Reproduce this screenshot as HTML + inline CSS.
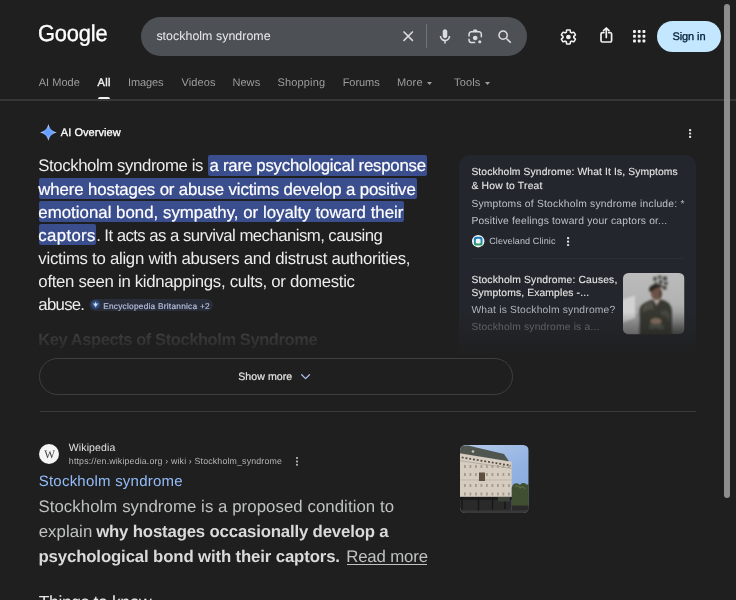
<!DOCTYPE html>
<html lang="en"><head><meta charset="utf-8"><title>stockholm syndrome - Google Search</title>
<style>
html,body{margin:0;padding:0;background:#1f1f1f;}
body{width:736px;height:600px;overflow:hidden;font-family:"Liberation Sans",Arial,sans-serif;}
#page{position:relative;width:736px;height:600px;overflow:hidden;background:#1f1f1f;}
.t{position:absolute;white-space:pre;line-height:1;}
.a{position:absolute;}
.hl{background:#3a4d8c;}
svg{position:absolute;overflow:visible;}

</style></head>
<body>
<div id="page">
<!-- search bar -->
<div class="a" style="left:141px;top:17px;width:386px;height:39px;border-radius:20px;background:#4d5156;"></div>
<!-- clear X -->
<svg style="left:402.7px;top:31.1px" width="10.4" height="10.4" viewBox="0 0 10.4 10.4"><path d="M0.5 0.5L9.9 9.9M9.9 0.5L0.5 9.9" stroke="#dadce0" stroke-width="1.5" fill="none"/></svg>
<div class="a" style="left:425.7px;top:24px;width:1px;height:24px;background:#6f7378;"></div>
<!-- mic -->
<svg style="left:435.8px;top:27.1px" width="18" height="18" viewBox="0 0 24 24" fill="#dadce0"><path d="M12 15c1.66 0 3-1.31 3-2.97V5.97C15 4.31 13.66 3 12 3S9 4.31 9 5.97v6.06C9 13.69 10.34 15 12 15z"/><path d="M11 18.08h2V22h-2z"/><path d="M7.05 16.87c-1.27-1.33-2.05-2.83-2.05-4.87h2c0 1.45.56 2.42 1.47 3.38v.32l-1.15 1.18z"/><path d="M12 16.93a4.97 5.25 0 0 1-3.54-1.55l-1.41 1.49c1.26 1.34 3.02 2.13 4.95 2.13 3.87 0 6.99-2.92 6.99-7h-1.99c0 2.92-2.24 4.93-5 4.93z"/></svg>
<!-- lens -->
<svg style="left:465.5px;top:27.9px" width="18.4" height="18.4" viewBox="0 -960 960 960" fill="#dadce0"><path d="M480-320q-50 0-85-35t-35-85q0-50 35-85t85-35q50 0 85 35t35 85q0 50-35 85t-85 35Zm240 160q-33 0-56.500-23.500T640-240q0-33 23.500-56.500T720-320q33 0 56.500 23.500T800-240q0 33-23.500 56.500T720-160Zm-440 0q-66 0-113-47t-47-113v-80h80v80q0 33 23.500 56.500T280-240h200v80H280Zm480-320v-160q0-33-23.500-56.500T680-720H280q-33 0-56.500 23.500T200-640v120h-80v-120q0-66 47-113t113-47h80l40-80h160l40 80h80q66 0 113 47t47 113v160h-80Z"/></svg>
<!-- search -->
<svg style="left:495.5px;top:27.6px" width="18" height="18" viewBox="0 0 24 24" fill="#dadce0"><path d="M15.500 14h-.79l-.28-.27A6.471 6.471 0 0 0 16 9.500 6.500 6.500 0 1 0 9.500 16c1.610 0 3.090-.590 4.230-1.570l.27.28v.79l5 4.990L20.490 19l-4.990-5zm-6 0C7.010 14 5 11.990 5 9.500S7.010 5 9.500 5 14 7.010 14 9.500 11.990 14 9.500 14z"/></svg>
<!-- gear -->
<svg style="left:559.2px;top:27.8px" width="18.8" height="18" viewBox="0 0 24 24" preserveAspectRatio="none" fill="#f1f1f1"><path d="M13.850 22.250h-3.700c-.740 0-1.360-.540-1.450-1.270l-.270-1.890c-.270-.140-.530-.290-.790-.460l-1.800.720c-.700.260-1.470-.030-1.810-.650L2.200 15.530c-.350-.660-.200-1.440.360-1.880l1.530-1.190c-.010-.150-.020-.300-.020-.460 0-.150.010-.310.020-.460l-1.520-1.190c-.590-.450-.740-1.260-.370-1.880l1.850-3.190c.340-.620 1.110-.900 1.790-.630l1.810.730c.260-.170.520-.320.780-.460l.270-1.910c.090-.700.710-1.250 1.440-1.250h3.700c.740 0 1.360.540 1.450 1.270l.270 1.890c.270.140.530.290.790.460l1.800-.720c.710-.260 1.480.030 1.820.650l1.840 3.180c.360.660.200 1.440-.360 1.880l-1.520 1.190c.1.150.2.300.2.460s-.1.310-.2.460l1.520 1.190c.560.450.720 1.230.370 1.860l-1.860 3.220c-.340.620-1.110.900-1.800.630l-1.800-.720c-.260.170-.520.320-.780.460l-.270 1.910c-.100.680-.720 1.220-1.460 1.220zm-3.230-2h2.760l.370-2.550.530-.220c.440-.180.880-.440 1.340-.780l.450-.340 2.380.960 1.380-2.400-2.030-1.580.070-.560c.030-.260.060-.510.060-.780s-.030-.530-.060-.780l-.070-.560 2.030-1.580-1.390-2.400-2.390.960-.450-.350c-.420-.320-.870-.580-1.330-.770l-.520-.220-.370-2.550h-2.760l-.370 2.550-.530.210c-.440.190-.880.440-1.340.790l-.450.330-2.380-.950-1.390 2.390 2.030 1.580-.070.560a7 7 0 0 0-.060.790c0 .260.020.530.060.780l.070.560-2.030 1.580 1.380 2.400 2.390-.960.450.350c.430.330.860.580 1.330.770l.530.220.38 2.550z"/><circle cx="12" cy="12" r="3"/></svg>
<!-- share -->
<svg style="left:600px;top:27px" width="12.6" height="16" viewBox="0 0 12.6 16" fill="none" stroke="#f1f1f1" stroke-width="1.7" stroke-linejoin="round" stroke-linecap="round"><path d="M3.9 5.600H2.400A1.400 1.400 0 0 0 1 7V13.600A1.400 1.400 0 0 0 2.400 15H10.200A1.400 1.400 0 0 0 11.600 13.600V7A1.400 1.400 0 0 0 10.200 5.600H8.700"/><path d="M6.300 10.400V1.300M3.600 3.700L6.300 1L9 3.700"/></svg>
<!-- apps -->
<svg style="left:632.9px;top:30.1px" width="12.4" height="12.4" viewBox="0 0 12.4 12.4" fill="#f1f1f1"><rect x="0.00" y="0.00" width="2.9" height="2.9" rx="0.9"/><rect x="4.75" y="0.00" width="2.9" height="2.9" rx="0.9"/><rect x="9.50" y="0.00" width="2.9" height="2.9" rx="0.9"/><rect x="0.00" y="4.75" width="2.9" height="2.9" rx="0.9"/><rect x="4.75" y="4.75" width="2.9" height="2.9" rx="0.9"/><rect x="9.50" y="4.75" width="2.9" height="2.9" rx="0.9"/><rect x="0.00" y="9.50" width="2.9" height="2.9" rx="0.9"/><rect x="4.75" y="9.50" width="2.9" height="2.9" rx="0.9"/><rect x="9.50" y="9.50" width="2.9" height="2.9" rx="0.9"/></svg>
<!-- sign in -->
<div class="a" style="left:657px;top:21px;width:64px;height:30.500px;border-radius:16px;background:#c2e7ff;"></div>
<!-- tabs underline + divider -->
<div class="a" style="left:98px;top:96.500px;width:12px;height:2.500px;border-radius:2px 2px 0 0;background:#f1f1f1;"></div>
<div class="a" style="left:0;top:99.300px;width:736px;height:1.300px;background:#363636;"></div>
<svg style="left:427.300px;top:82.300px" width="5" height="3" viewBox="0 0 5 3"><path d="M0 0H5L2.500 3Z" fill="#9e9e9e"/></svg>
<svg style="left:485px;top:82.300px" width="5" height="3" viewBox="0 0 5 3"><path d="M0 0H5L2.500 3Z" fill="#9e9e9e"/></svg>
<!-- AI star -->
<svg style="left:39.700px;top:124.400px" width="16.800" height="16.800" viewBox="0 0 16 16"><defs><radialGradient id="sg" cx="50%" cy="50%" r="50%"><stop offset="0" stop-color="#5f9bff"/><stop offset="0.500" stop-color="#72a7ff"/><stop offset="1" stop-color="#dbe8ff"/></radialGradient></defs><path d="M8 0C8.900 4.300 11.700 7.100 16 8C11.700 8.900 8.900 11.700 8 16C7.100 11.700 4.300 8.900 0 8C4.300 7.100 7.100 4.300 8 0Z" fill="url(#sg)"/></svg>
<!-- AI three dots -->
<svg style="left:689.00px;top:128.90px" width="2.20" height="9.00" viewBox="0 0 2.20 9.00" fill="#e2e2e2"><rect x="0" y="0.00" width="2.20" height="2.20" rx="0.77"/><rect x="0" y="3.40" width="2.20" height="2.20" rx="0.77"/><rect x="0" y="6.80" width="2.20" height="2.20" rx="0.77"/></svg>
<!-- highlights -->
<div class="a hl" style="left:207.8px;top:154.5px;width:219.0px;height:21.700px;border-radius:2px;"></div>
<div class="a hl" style="left:38.8px;top:177.6px;width:377.9px;height:21.700px;border-radius:2px;"></div>
<div class="a hl" style="left:38.8px;top:200.7px;width:365.6px;height:21.700px;border-radius:2px;"></div>
<div class="a hl" style="left:38.8px;top:223.8px;width:57.4px;height:21.700px;border-radius:2px;"></div>
<!-- chip -->
<div class="a" style="left:89px;top:298.800px;width:123.500px;height:12.400px;border-radius:6.200px;background:#292c39;"></div>
<svg style="left:90.900px;top:300.400px" width="9.200" height="9.200" viewBox="0 0 20 20"><circle cx="10" cy="10" r="10" fill="#2b4b7c"/><path d="M10 3.500L12.200 8.200L16.500 7L13.600 11L10 16.500L6.400 11L3.500 7L7.800 8.200Z" fill="#b9cdea"/><circle cx="10" cy="9.500" r="2" fill="#e4eefb"/></svg>
<!-- show more -->
<div class="a" style="left:39px;top:358.200px;width:471.600px;height:35.200px;border:1.200px solid #3f3f3f;border-radius:19px;"></div>
<svg style="left:301.400px;top:374.300px" width="9.200" height="5.400" viewBox="0 0 9.200 5.400" fill="none" stroke="#a9bfe6" stroke-width="1.300" stroke-linecap="round" stroke-linejoin="round"><path d="M0.700 0.700L4.600 4.600L8.500 0.700"/></svg>
<div class="a" style="left:39.500px;top:411px;width:656.500px;height:1px;background:#3a3a3a;"></div>
<!-- right card -->
<div class="a" id="card" style="left:459px;top:154.500px;width:237px;height:200px;border-radius:11px 11px 0 0;background:#23262c;"></div>
<div class="a" style="left:472px;top:258.400px;width:211px;height:1px;background:#2c2f36;"></div>
<!-- cleveland icon -->
<svg style="left:471.500px;top:234.800px" width="12.400" height="12.400" viewBox="0 0 24 24"><defs><linearGradient id="ccg" x1="0" y1="0" x2="0" y2="1"><stop offset="0" stop-color="#1777bd"/><stop offset="0.500" stop-color="#1f86b5"/><stop offset="1" stop-color="#2fa24f"/></linearGradient></defs><circle cx="12" cy="12" r="12" fill="#f4f6f8"/><rect x="3.600" y="3.600" width="16.800" height="16.800" rx="5" fill="url(#ccg)"/><rect x="7.400" y="7.400" width="9.200" height="9.200" rx="2.600" fill="#f1f6f4"/></svg>
<svg style="left:567.00px;top:236.85px" width="2.20" height="9.10" viewBox="0 0 2.20 9.10" fill="#dcdee2"><rect x="0" y="0.00" width="2.20" height="2.20" rx="0.77"/><rect x="0" y="3.45" width="2.20" height="2.20" rx="0.77"/><rect x="0" y="6.90" width="2.20" height="2.20" rx="0.77"/></svg>
<!-- man thumb -->
<svg style="left:622.700px;top:273px" width="61.500" height="61.200" viewBox="0 0 61.500 61.200"><defs><clipPath id="mc"><rect width="61.500" height="61.200" rx="5.500"/></clipPath><linearGradient id="mbg" x1="0" y1="0" x2="0" y2="1"><stop offset="0" stop-color="#bcbcbc"/><stop offset="0.500" stop-color="#b2b2b2"/><stop offset="0.800" stop-color="#8f8f8f"/><stop offset="1" stop-color="#5c5c5c"/></linearGradient><filter id="bl" x="-10%" y="-10%" width="120%" height="120%"><feGaussianBlur stdDeviation="0.850"/></filter></defs><g clip-path="url(#mc)"><rect width="61.500" height="61.200" fill="url(#mbg)"/><g filter="url(#bl)"><path d="M-2 27L12 22.500L12.500 45L-2 51Z" fill="#d2d2d2"/><path d="M-2 50L16 44V63H-2Z" fill="#a5a5a5"/><rect x="30.500" y="3.800" width="3" height="4" fill="#3f403b"/><rect x="35" y="2.600" width="3.600" height="3.200" fill="#4a4b45"/><rect x="40" y="3.600" width="4" height="3.600" fill="#3f403b"/><rect x="31.500" y="9" width="3" height="3" fill="#55564f"/><rect x="36" y="7.200" width="3.400" height="3.600" fill="#3f403b"/><rect x="41" y="8.600" width="3.600" height="3.400" fill="#4a4b45"/><rect x="40" y="13" width="3.400" height="3.600" fill="#3f403b"/><ellipse cx="33.500" cy="20" rx="5.600" ry="7.200" fill="#6c5347"/><path d="M36 17C39 18 39.500 24 36.500 27C37 23 37 20 36 17Z" fill="#3e2e27"/><path d="M26 17.500C25.500 10.500 37 8.500 41 14.500C37.500 13.500 31.500 14.500 28.500 19.500Z" fill="#2a2622"/><path d="M30 26L33.500 31L37.500 26L38 30L33.500 35L29.500 30Z" fill="#8d7263"/><path d="M16.500 63V37C17.500 30 25 28 30 26.500L33.500 33L37.500 26.500C44 27.500 48.500 31 49 38V63Z" fill="#383932"/><path d="M20 33C23 29.500 27 28.500 29.500 28L30.500 37C27 36 23 36.500 20 40Z" fill="#54564b" opacity="0.750"/><path d="M38 38C42 36 46 38 47 42L46 50C44 45 41 42 38 42Z" fill="#4c4d44" opacity="0.700"/><ellipse cx="33" cy="48.500" rx="5.500" ry="3.200" fill="#8f7868"/><path d="M26 52C30 50 37 50 41 53L40 57C36 55 30 55 27 57Z" fill="#5e5f55" opacity="0.800"/></g></g></svg>
<!-- card fade -->
<div class="a" style="left:455px;top:312px;width:245px;height:46px;background:linear-gradient(to bottom,rgba(31,31,31,0) 0%,rgba(31,31,31,0.450) 45%,rgba(31,31,31,0.800) 75%,#1f1f1f 100%);"></div>
<!-- wiki favicon -->
<div class="a" style="left:39.400px;top:443.600px;width:20px;height:20px;border-radius:50%;background:#f5f5f5;"></div>
<svg style="left:296.00px;top:456.50px" width="2.00" height="8.80" viewBox="0 0 2.00 8.80" fill="#b8b8b8"><rect x="0" y="0.00" width="2.00" height="2.00" rx="0.70"/><rect x="0" y="3.40" width="2.00" height="2.00" rx="0.70"/><rect x="0" y="6.80" width="2.00" height="2.00" rx="0.70"/></svg>
<!-- building thumb -->
<svg style="left:460px;top:444.700px" width="68.700" height="68" viewBox="0 0 68.700 68"><defs><clipPath id="bc"><rect width="68.700" height="68" rx="5.500"/></clipPath><linearGradient id="sky" x1="0" y1="0" x2="0.600" y2="1"><stop offset="0" stop-color="#b6cbea"/><stop offset="0.600" stop-color="#93b3e2"/><stop offset="1" stop-color="#86a9dc"/></linearGradient><filter id="bl2" x="-10%" y="-10%" width="120%" height="120%"><feGaussianBlur stdDeviation="0.450"/></filter></defs><g clip-path="url(#bc)"><rect width="68.700" height="68" fill="url(#sky)"/><g filter="url(#bl2)"><path d="M-2 0.800L8 0.400L44 9L48.500 15.500V17.500L-2 9Z" fill="#4f564f"/><circle cx="13" cy="6.500" r="1.300" fill="#c9c4b8"/><path d="M-2 8L51.700 16.800V54H-2Z" fill="#d6cdc0"/><path d="M-2 11.800L51 20.600" stroke="#4e4a44" stroke-width="1.700" stroke-dasharray="1.900 1.900"/><path d="M-2 15.400L51.700 23.400" stroke="#b5ab9c" stroke-width="1"/><path d="M4 21.500H50M4 29.500H50M4 40.500H50M4 49H50" stroke="#a59c8d" stroke-width="3" stroke-dasharray="1.800 3.700"/><path d="M-2 35H51.700" stroke="#bdb4a6" stroke-width="0.900"/><rect x="19" y="27.500" width="6" height="8.500" fill="#5f4f40"/><path d="M51.700 43C53 37 58 37.500 60 40C62 37 66 38 67 40C68 38.500 70 39 70 39V62H51.700Z" fill="#414f33"/><path d="M55 42C57 40 59 41 60 43C62 41 64 42 65 44" stroke="#5c6c45" stroke-width="1.200" fill="none"/><rect x="-2" y="51.800" width="53.700" height="18" fill="#2a2a2a"/><rect x="51.700" y="60.500" width="20" height="10" fill="#2c2c2c"/><path d="M-2 53.500H51.700" stroke="#1c1c1c" stroke-width="2.600"/><path d="M2 52V65M18.500 52V66M32.500 52V65M45 52V64" stroke="#151515" stroke-width="1.300"/><rect x="-2" y="65.500" width="74" height="4" fill="#383838"/><rect x="38" y="52" width="12" height="4.500" fill="#3a3f36"/></g></g></svg>
<div class="a" style="left:347px;top:563.700px;width:80.200px;height:1px;background:#bfc2c0;"></div>
<!-- scrollbar -->
<div class="a" style="left:724px;top:4px;width:6px;height:494px;border-radius:3px;background:rgba(160,160,160,0.86);"></div>

<svg id="txt" width="736" height="600" viewBox="0 0 736 600" style="left:0;top:0;text-rendering:geometricPrecision;white-space:pre;will-change:transform" font-family="Liberation Sans, sans-serif">
<defs><linearGradient id="hfade" gradientUnits="userSpaceOnUse" x1="0" y1="332" x2="0" y2="350"><stop offset="0" stop-color="#404040"/><stop offset="1" stop-color="#282828"/></linearGradient></defs>
<text transform="translate(38.05,41.30) scale(0.95,1)" font-size="23" fill="#ffffff" stroke="#ffffff" stroke-width="0.35" letter-spacing="-0.185">Google</text>
<text x="156.38" y="40.00" font-size="12.4" fill="#e8eaed" letter-spacing="0.036">stockholm syndrome</text>
<text x="672.45" y="40.00" font-size="11" fill="#001d35" stroke="#001d35" stroke-width="0.3" letter-spacing="-0.090">Sign in</text>
<text x="38.65" y="86.00" font-size="11" fill="#9e9e9e" letter-spacing="0.039">AI Mode</text>
<text x="97.45" y="86.00" font-size="11" fill="#f1f1f1" stroke="#f1f1f1" stroke-width="0.4" letter-spacing="0.433">All</text>
<text x="127.95" y="86.00" font-size="11" fill="#9e9e9e" letter-spacing="-0.096">Images</text>
<text x="181.45" y="86.00" font-size="11" fill="#9e9e9e" letter-spacing="0.133">Videos</text>
<text x="232.45" y="86.00" font-size="11" fill="#9e9e9e" letter-spacing="0.061">News</text>
<text x="277.45" y="86.00" font-size="11" fill="#9e9e9e" letter-spacing="0.157">Shopping</text>
<text x="342.65" y="86.00" font-size="11" fill="#9e9e9e" letter-spacing="-0.036">Forums</text>
<text x="397.05" y="86.00" font-size="11" fill="#9e9e9e" letter-spacing="0.146">More</text>
<text x="454.05" y="86.00" font-size="11" fill="#9e9e9e" letter-spacing="0.153">Tools</text>
<text x="60.75" y="136.40" font-size="11" fill="#ffffff" stroke="#ffffff" stroke-width="0.3" letter-spacing="0.070">AI Overview</text>
<text x="38.26" y="171.40" font-size="16.8" fill="#ececec" letter-spacing="-0.414">Stockholm syndrome is</text>
<text x="209.46" y="171.40" font-size="16.8" fill="#ffffff" stroke="#ffffff" stroke-width="0.22" letter-spacing="-0.228">a rare psychological response</text>
<text x="38.36" y="194.50" font-size="16.8" fill="#ffffff" stroke="#ffffff" stroke-width="0.22" letter-spacing="-0.123">where hostages or abuse victims develop a positive</text>
<text x="38.36" y="217.60" font-size="16.8" fill="#ffffff" stroke="#ffffff" stroke-width="0.22" letter-spacing="0.034">emotional bond, sympathy, or loyalty toward their</text>
<text x="38.36" y="240.70" font-size="16.8" fill="#ffffff" stroke="#ffffff" stroke-width="0.22" letter-spacing="0.325">captors</text>
<text x="96.16" y="240.70" font-size="16.8" fill="#ececec" letter-spacing="-0.560">. It acts as a survival mechanism, causing</text>
<text x="38.36" y="263.80" font-size="16.8" fill="#ececec" letter-spacing="-0.276">victims to align with abusers and distrust authorities,</text>
<text x="38.36" y="286.90" font-size="16.8" fill="#ececec" letter-spacing="-0.310">often seen in kidnappings, cults, or domestic</text>
<text x="38.36" y="310.00" font-size="16.8" fill="#ececec" letter-spacing="-0.742">abuse.</text>
<text x="103.18" y="308.80" font-size="8.3" fill="#b7c2de" stroke="#b7c2de" stroke-width="0.15" letter-spacing="0.244">Encyclopedia Britannica +2</text>
<text x="38.17" y="345.30" font-size="16.5" font-weight="700" fill="url(#hfade)" letter-spacing="-0.417">Key Aspects of Stockholm Syndrome</text>
<text x="238.17" y="380.00" font-size="10.6" fill="#e3e3e3" stroke="#e3e3e3" stroke-width="0.2" letter-spacing="0.058">Show more</text>
<text x="471.38" y="175.20" font-size="10.3" fill="#e6e6e6" stroke="#e6e6e6" stroke-width="0.12" letter-spacing="0.125">Stockholm Syndrome: What It Is, Symptoms</text>
<text x="471.38" y="188.50" font-size="10.3" fill="#e6e6e6" stroke="#e6e6e6" stroke-width="0.12" letter-spacing="0.225">&amp; How to Treat</text>
<text x="471.38" y="206.90" font-size="10.3" fill="#bfc2c8" letter-spacing="0.218">Symptoms of Stockholm syndrome include: *</text>
<text x="471.38" y="223.60" font-size="10.3" fill="#bfc2c8" letter-spacing="0.190">Positive feelings toward your captors or...</text>
<text x="489.15" y="244.40" font-size="9" fill="#bfc2c8" letter-spacing="0.118">Cleveland Clinic</text>
<text x="471.38" y="282.60" font-size="10.3" fill="#e6e6e6" stroke="#e6e6e6" stroke-width="0.12" letter-spacing="0.176">Stockholm Syndrome: Causes,</text>
<text x="471.38" y="295.90" font-size="10.3" fill="#e6e6e6" stroke="#e6e6e6" stroke-width="0.12" letter-spacing="0.145">Symptoms, Examples -...</text>
<text x="471.38" y="313.30" font-size="10.3" fill="#b0b3b9" letter-spacing="0.183">What is Stockholm syndrome?</text>
<text x="471.38" y="330.30" font-size="10.3" fill="#5e6167" letter-spacing="0.173">Stockholm syndrome is a...</text>
<text x="44.13" y="457.70" font-size="11.4" font-family="Liberation Serif" fill="#444444" letter-spacing="0.000">W</text>
<text x="68.77" y="450.50" font-size="10.5" fill="#e0e0e0" letter-spacing="0.127">Wikipedia</text>
<text x="68.86" y="464.40" font-size="8.8" fill="#b5b5b5" letter-spacing="0.159">https://en.wikipedia.org › wiki › Stockholm_syndrome</text>
<text x="38.75" y="486.30" font-size="15" fill="#93bcf8" letter-spacing="0.220">Stockholm syndrome</text>
<text x="38.46" y="512.00" font-size="16.8" fill="#bfc2c0" letter-spacing="0.068">Stockholm syndrome is a proposed condition to</text>
<text x="38.66" y="536.90" font-size="16.8" fill="#bfc2c0" letter-spacing="0.065">explain</text>
<text x="96.16" y="536.90" font-size="16.8" font-weight="700" fill="#dadada" letter-spacing="-0.176">why hostages occasionally develop a</text>
<text x="38.46" y="561.80" font-size="16.8" font-weight="700" fill="#dadada" letter-spacing="-0.140">psychological bond with their captors.</text>
<text x="346.16" y="561.80" font-size="16.8" fill="#bfc2c0" letter-spacing="-0.142">Read more</text>
<text x="38.73" y="607.80" font-size="17.5" fill="#e8e8e8" letter-spacing="-0.366">Things to know</text>
</svg>
</div>
</body></html>
